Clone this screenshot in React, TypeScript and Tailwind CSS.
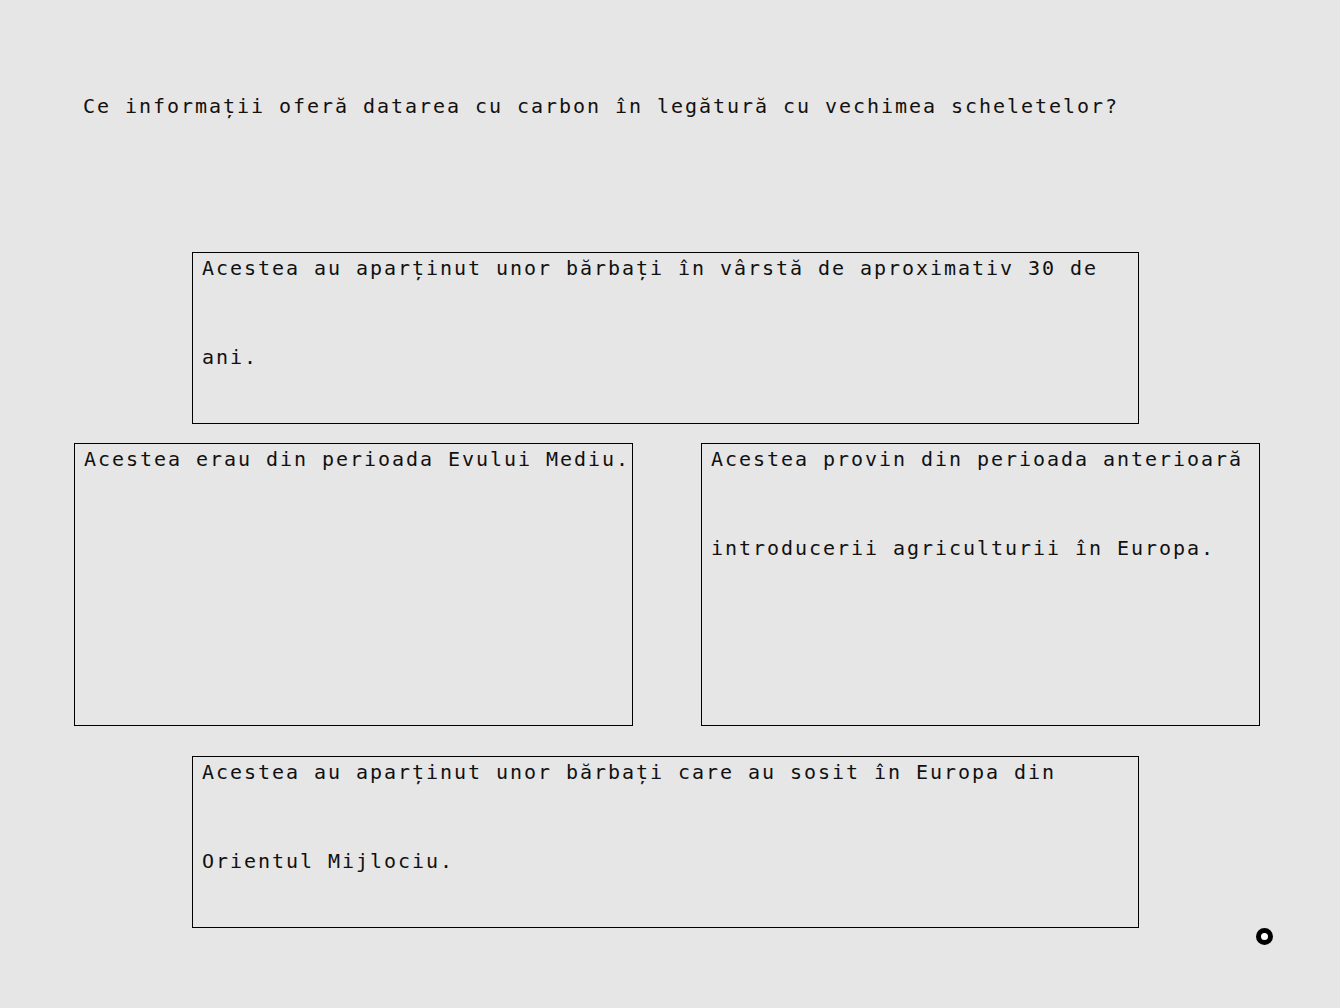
import React from "react";

const answers = {
  top: ["Acestea au aparținut unor bărbați în vârstă de aproximativ 30 de", "ani."],
  left: ["Acestea erau din perioada Evului Mediu."],
  right: ["Acestea provin din perioada anterioară", "introducerii agriculturii în Europa."],
  bottom: ["Acestea au aparținut unor bărbați care au sosit în Europa din", "Orientul Mijlociu."],
};

function AnswerBox({ lines, className }: { lines: string[]; className: string }) {
  return (
    <div className={`border border-black pl-[9px] pt-[4px] ${className}`}>
      {lines.map((line, i) => (
        <div key={i} className={`leading-[23px] whitespace-pre ${i > 0 ? "mt-[66px]" : ""}`}>
          {line}
        </div>
      ))}
    </div>
  );
}

export default function App() {
  return (
    <div
      className="relative w-[1340px] h-[1008px] bg-[#e6e6e6] text-[#111] text-[20px] tracking-[1.96px] overflow-hidden"
      style={{ fontFamily: '"DejaVu Sans Mono", "Liberation Mono", monospace' }}
    >
      <div className="pt-[95px] pl-[83px] leading-[23px]">
        Ce informații oferă datarea cu carbon în legătură cu vechimea scheletelor?
      </div>

      <div className="mt-[134px] flex flex-col">
        <AnswerBox lines={answers.top} className="ml-[192px] w-[947px] h-[172px]" />

        <div className="mt-[19px] ml-[74px] flex gap-[68px]">
          <AnswerBox lines={answers.left} className="w-[559px] h-[283px]" />
          <AnswerBox lines={answers.right} className="w-[559px] h-[283px]" />
        </div>

        <AnswerBox lines={answers.bottom} className="mt-[30px] ml-[192px] w-[947px] h-[172px]" />
      </div>

      {/* ring marker, bottom right */}
      <div className="absolute left-[1256px] top-[928px] w-[17px] h-[17px] rounded-full border-[5px] border-black bg-white" />
    </div>
  );
}
